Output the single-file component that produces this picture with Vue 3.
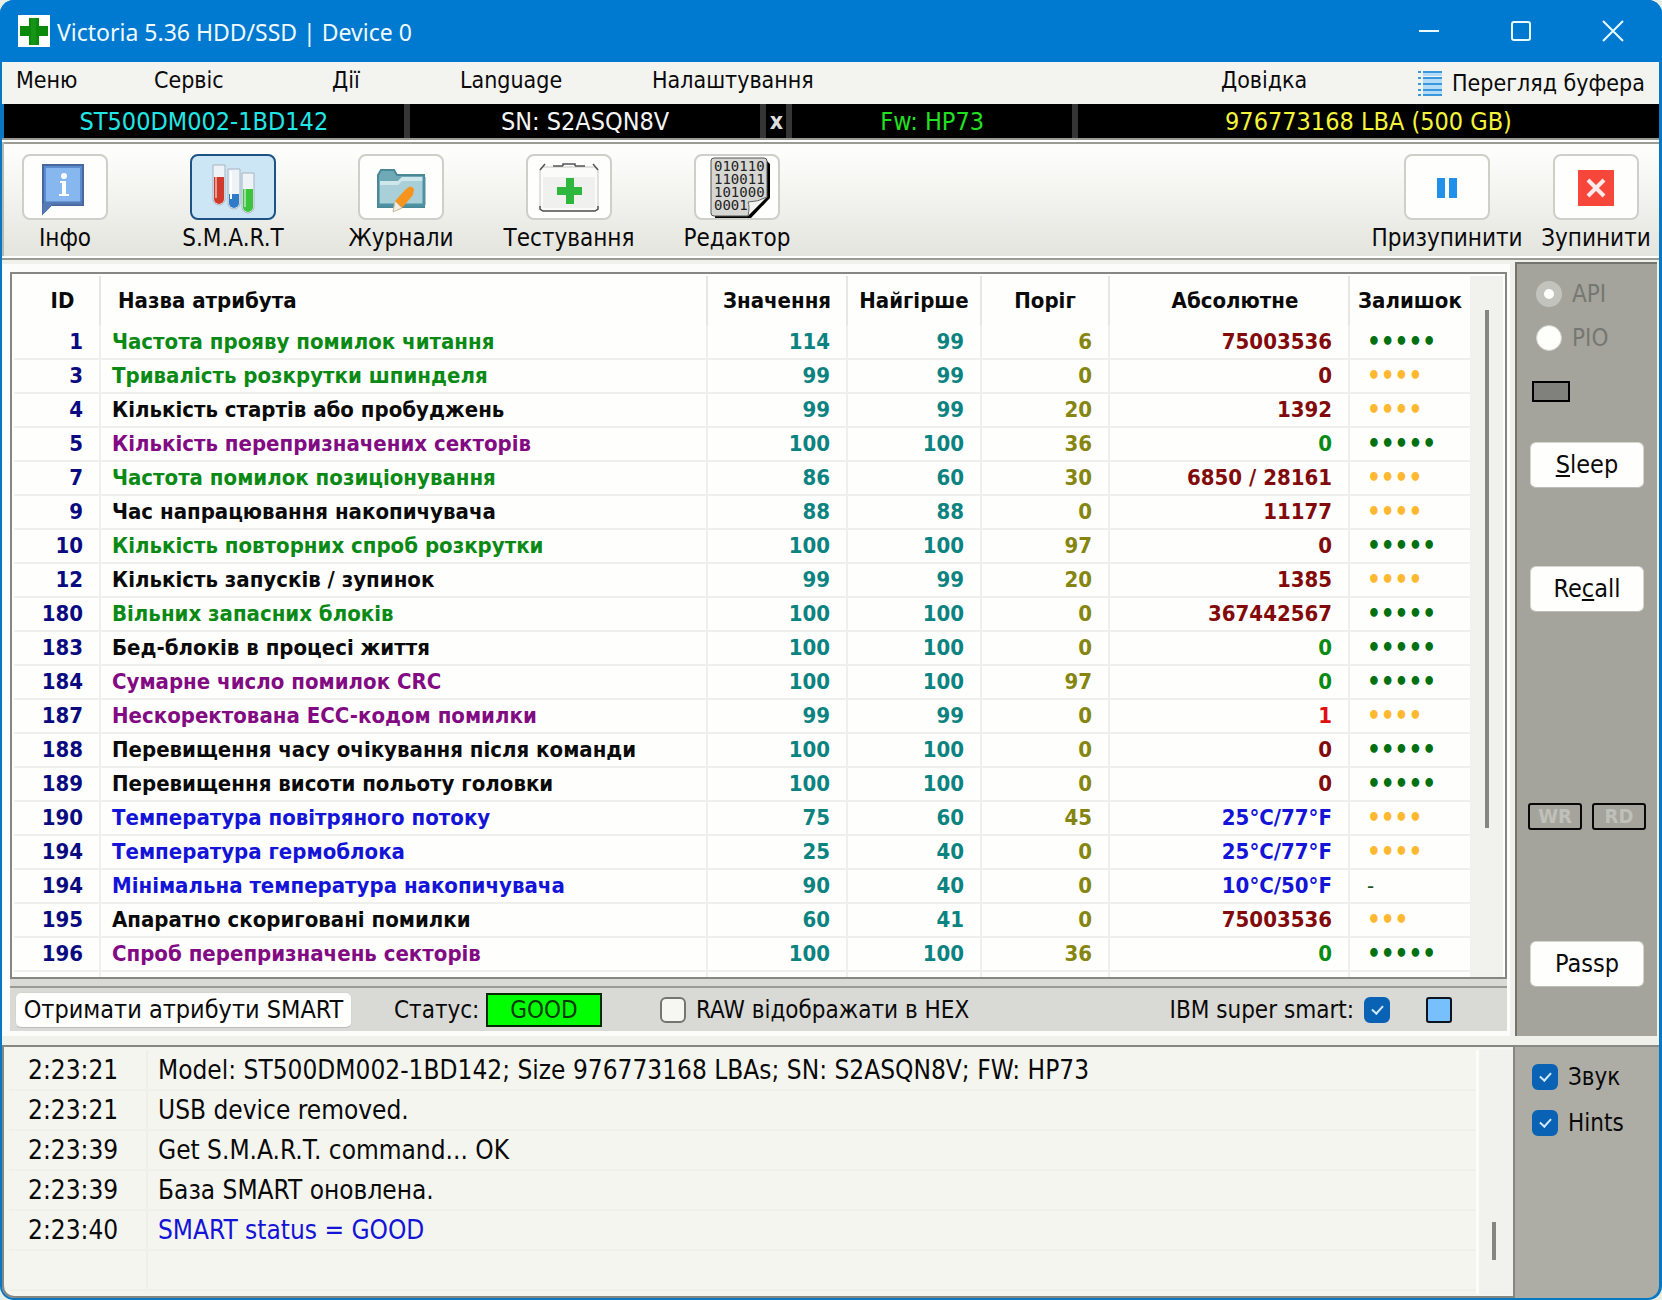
<script setup>
import { ref } from 'vue'

const menu = ['Меню', 'Сервіс', 'Дії', 'Language', 'Налаштування', 'Довідка']

const active = ref('smart')
const tools = [
  { id: 'info', label: 'Інфо' },
  { id: 'smart', label: 'S.M.A.R.T' },
  { id: 'logs', label: 'Журнали' },
  { id: 'test', label: 'Тестування' },
  { id: 'editor', label: 'Редактор' },
]

// id, name, name colour, value, worst, threshold, raw, raw colour, health
const rows = [
  [1, 'Частота прояву помилок читання', 'green', 114, 99, 6, '75003536', 'maroon', 5],
  [3, 'Тривалість розкрутки шпинделя', 'green', 99, 99, 0, '0', 'maroon', 4],
  [4, 'Кількість стартів або пробуджень', 'black', 99, 99, 20, '1392', 'maroon', 4],
  [5, 'Кількість перепризначених секторів', 'purple', 100, 100, 36, '0', 'green', 5],
  [7, 'Частота помилок позиціонування', 'green', 86, 60, 30, '6850 / 28161', 'maroon', 4],
  [9, 'Час напрацювання накопичувача', 'black', 88, 88, 0, '11177', 'maroon', 4],
  [10, 'Кількість повторних спроб розкрутки', 'green', 100, 100, 97, '0', 'maroon', 5],
  [12, 'Кількість запусків / зупинок', 'black', 99, 99, 20, '1385', 'maroon', 4],
  [180, 'Вільних запасних блоків', 'green', 100, 100, 0, '367442567', 'maroon', 5],
  [183, 'Бед-блоків в процесі життя', 'black', 100, 100, 0, '0', 'green', 5],
  [184, 'Сумарне число помилок CRC', 'purple', 100, 100, 97, '0', 'green', 5],
  [187, 'Нескоректована ECC-кодом помилки', 'purple', 99, 99, 0, '1', 'red', 4],
  [188, 'Перевищення часу очікування після команди', 'black', 100, 100, 0, '0', 'maroon', 5],
  [189, 'Перевищення висоти польоту головки', 'black', 100, 100, 0, '0', 'maroon', 5],
  [190, 'Температура повітряного потоку', 'blue', 75, 60, 45, '25°C/77°F', 'blue', 4],
  [194, 'Температура гермоблока', 'blue', 25, 40, 0, '25°C/77°F', 'blue', 4],
  [194, 'Мінімальна температура накопичувача', 'blue', 90, 40, 0, '10°C/50°F', 'blue', 0],
  [195, 'Апаратно скориговані помилки', 'black', 60, 41, 0, '75003536', 'maroon', 3],
  [196, 'Спроб перепризначень секторів', 'purple', 100, 100, 36, '0', 'green', 5],
]

const log = [
  ['2:23:21', 'Model: ST500DM002-1BD142; Size 976773168 LBAs; SN: S2ASQN8V; FW: HP73'],
  ['2:23:21', 'USB device removed.'],
  ['2:23:39', 'Get S.M.A.R.T. command... OK'],
  ['2:23:39', 'База SMART оновлена.'],
  ['2:23:40', 'SMART status = GOOD', 'blue'],
]

const hex = ref(false)
const ibm = ref(true)
const sound = ref(true)
const hints = ref(true)
const access = ref('api')
</script>

<template>
  <div class="window">
    <header class="titlebar">
      <svg class="logo" viewBox="0 0 32 32" aria-hidden="true">
        <rect width="32" height="32" fill="#fff" />
        <path d="M11 3h10v8h9v10h-9v9H11v-9H2V11h9z" fill="#0a8a0a" />
        <path d="M13 3h5v27h-5z" fill="#2aa32a" opacity=".4" />
      </svg>
      <h1>Victoria 5.36 HDD/SSD | Device 0</h1>
      <div class="caption">
        <button aria-label="Minimize"><svg viewBox="0 0 20 20"><path d="M0 10h20" /></svg></button>
        <button aria-label="Maximize"><svg viewBox="0 0 20 20"><rect x="1" y="1" width="18" height="18" rx="2" /></svg></button>
        <button aria-label="Close"><svg viewBox="0 0 20 20"><path d="M0 0l20 20M20 0L0 20" /></svg></button>
      </div>
    </header>

    <nav class="menu">
      <button v-for="m in menu" :key="m">{{ m }}</button>
      <button class="buffer">
        <svg viewBox="0 0 24 25" aria-hidden="true">
          <path d="M0 1h3M0 7h3M0 13h3M0 19h3M0 24h3" stroke="#3a9ae0" stroke-width="2" />
          <path d="M5 3h19M5 10h19M5 16h19M5 22h19" stroke="#b5dcf7" stroke-width="4" />
          <path d="M5 1h19M5 7h19M5 13h19M5 19h19M5 24h19" stroke="#3a97dd" stroke-width="2" />
        </svg>
        Перегляд буфера
      </button>
    </nav>

    <section class="drive">
      <span class="model">ST500DM002-1BD142</span>
      <span class="serial">SN: S2ASQN8V</span>
      <button class="clear">x</button>
      <span class="fw">Fw: HP73</span>
      <span class="lba">976773168 LBA (500 GB)</span>
    </section>

    <section class="toolbar">
      <div v-for="t in tools" :key="t.id" class="tool">
        <button :id="t.id" :class="{ on: active === t.id }" :aria-labelledby="t.id + '-l'" @click="active = t.id">
          <svg v-if="t.id === 'info'" viewBox="0 0 60 60" aria-hidden="true">
            <path d="M8 8h40v40H16l-8 8z" fill="#7db0ea" stroke="#46689f" stroke-width="2" />
            <path d="M10 10h36v36H10z" fill="#86b7ee" stroke="#5c8bcf" stroke-width="2" />
            <path d="M9 46h38M9 48v6l6-6z" stroke="#5579b4" stroke-width="3" fill="#5579b4" />
            <circle cx="29" cy="19" r="3" fill="#fff" />
            <path d="M25 24h6v13h3v2H24v-2h3V26h-2z" fill="#fff" />
          </svg>
          <svg v-else-if="t.id === 'smart'" viewBox="0 0 60 60" aria-hidden="true">
            <g stroke="#a9b3bd" stroke-width="1" fill="#eef3f8">
              <path d="M10 8h12v34a6 6 0 0 1-12 0z" />
              <path d="M25 12h12v34a6 6 0 0 1-12 0z" />
              <path d="M39 16h12v34a6 6 0 0 1-12 0z" />
            </g>
            <path d="M11 20h10v22a5 5 0 0 1-10 0z" fill="#d03a2c" />
            <path d="M26 37h10v9a5 5 0 0 1-10 0z" fill="#2e7cc8" />
            <path d="M40 32h10v18a5 5 0 0 1-10 0z" fill="#3cc43c" />
            <path d="M13 20v21M42 32v18" stroke="#fff" stroke-width="2" opacity=".5" />
            <path d="M28 14v28" stroke="#fff" stroke-width="2" />
          </svg>
          <svg v-else-if="t.id === 'logs'" viewBox="0 0 60 60" aria-hidden="true">
            <path d="M7 50V18l3-5h13l3 5h27v32z" fill="#6fa9b5" stroke="#4a8797" stroke-width="2" />
            <path d="M9 24h18l4-4h22v29H9z" fill="#a9d0d9" />
            <path d="M9 24h18l4-4h22v4H31l-4 4H9z" fill="#cfe6eb" />
            <path d="M8 48h46M53 20v28" stroke="#4d92a3" stroke-width="3" />
            <path d="M24 44l11-12q5-5 8 0l-1 6-11 13z" fill="#f7941d" />
            <path d="M24 44l7 7-9 4z" fill="#f4ece0" stroke="#c9b9a0" />
          </svg>
          <svg v-else-if="t.id === 'test'" viewBox="0 0 60 60" aria-hidden="true">
            <rect x="1" y="10" width="58" height="44" rx="3" fill="#fbfbf9" stroke="#c5c5c0" />
            <rect x="4" y="20" width="52" height="31" fill="#f0f0ee" />
            <path d="M1 13l5-6M59 13l-5-6M14 9h10M36 9h10M24 9V7h12v2M1 49v3l3 2h52l3-2v-3" fill="none" stroke="#555" stroke-width="1.5" />
            <path d="M27 21h8v9h8v8h-8v9h-8v-9h-9v-8h9z" fill="#2db73d" />
          </svg>
          <svg v-else viewBox="0 0 60 60" aria-hidden="true">
            <path d="M10 4h50l3 3v34L44 61H8z" fill="#000" />
            <path d="M4 4q0-3 3-3h50q3 0 3 3v36L41 59H7q-3 0-3-3z" fill="#d6d6d2" stroke="#555" />
            <g font-family="DejaVu Sans Mono, monospace" font-size="14" fill="#222">
              <text x="7" y="14">010110</text>
              <text x="7" y="27">110011</text>
              <text x="7" y="40">101000</text>
              <text x="7" y="53">0001</text>
            </g>
            <path d="M41 59q2-10 0-14 10 0 19-5z" fill="#f4f4f2" stroke="#666" />
          </svg>
        </button>
        <label :id="t.id + '-l'" :for="t.id">{{ t.label }}</label>
      </div>
      <div class="tool pause">
        <button id="pause">
          <svg viewBox="0 0 60 60" aria-hidden="true"><path d="M20 21h8v20h-8zM32 21h8v20h-8z" fill="#2090ea" /></svg>
        </button>
        <label for="pause">Призупинити</label>
      </div>
      <div class="tool stop">
        <button id="stop">
          <svg viewBox="0 0 60 60" aria-hidden="true">
            <rect x="12" y="13" width="36" height="36" fill="#f6473a" />
            <path d="M22 23l16 16M38 23L22 39" stroke="#fdeaea" stroke-width="4" />
          </svg>
        </button>
        <label for="stop">Зупинити</label>
      </div>
    </section>

    <div class="main">
      <main class="smart">
        <div class="grid">
          <table>
            <colgroup>
              <col class="c-id" /><col /><col class="c-val" /><col class="c-worst" />
              <col class="c-thr" /><col class="c-raw" /><col class="c-health" />
            </colgroup>
            <thead>
              <tr>
                <th class="id">ID</th><th class="left">Назва атрибута</th><th>Значення</th><th>Найгірше</th>
                <th>Поріг</th><th class="raw">Абсолютне</th><th>Залишок</th>
              </tr>
            </thead>
            <tbody>
              <tr v-for="(r, i) in rows" :key="i">
                <td class="num navy">{{ r[0] }}</td>
                <td :class="r[2]">{{ r[1] }}</td>
                <td class="num teal">{{ r[3] }}</td>
                <td class="num teal">{{ r[4] }}</td>
                <td class="num olive">{{ r[5] }}</td>
                <td class="num" :class="r[7]">{{ r[6] }}</td>
                <td class="health" :class="{ full: r[8] === 5, none: !r[8] }">{{ r[8] ? '•'.repeat(r[8]) : '-' }}</td>
              </tr>
              <tr class="rest"><td v-for="n in 7" :key="n"></td></tr>
            </tbody>
          </table>
          <div class="scroll"><i></i></div>
        </div>

        <div class="status">
          <button class="push">Отримати атрибути SMART</button>
          <span class="status-label">Статус:</span>
          <output class="good">GOOD</output>
          <label class="check hex"><input v-model="hex" type="checkbox" />RAW відображати в HEX</label>
          <label class="check ibm">IBM super smart:<input v-model="ibm" type="checkbox" /></label>
          <i class="swatch"></i>
        </div>
      </main>

      <aside class="side">
        <label class="radio"><input v-model="access" type="radio" value="api" disabled />API</label>
        <label class="radio"><input v-model="access" type="radio" value="pio" disabled />PIO</label>
        <i class="lamp"></i>
        <button class="push"><u>S</u>leep</button>
        <button class="push recall">Re<u>c</u>all</button>
        <div class="leds"><span>WR</span><span>RD</span></div>
        <button class="push passp">Passp</button>
      </aside>
    </div>

    <footer class="bottom">
      <div class="log">
        <table>
          <tbody>
            <tr v-for="(l, i) in log" :key="i">
              <td class="time">{{ l[0] }}</td>
              <td :class="l[2]">{{ l[1] }}</td>
            </tr>
            <tr><td class="time"></td><td></td></tr>
          </tbody>
        </table>
        <div class="scroll"><i></i></div>
      </div>
      <aside class="options">
        <label class="check"><input v-model="sound" type="checkbox" />Звук</label>
        <label class="check"><input v-model="hints" type="checkbox" />Hints</label>
      </aside>
    </footer>
  </div>
</template>

<style>
body {
  background: #e8efe6;
}
</style>

<style scoped>
* {
  box-sizing: border-box;
}

button {
  margin: 0;
  padding: 0;
  border: 0;
  background: none;
  color: inherit;
  font: inherit;
}

.window {
  display: flex;
  flex-direction: column;
  min-height: 100vh;
  padding: 0 3px 2px 2px;
  border-radius: 14px;
  overflow: hidden;
  background: #0878c4;
  color: #0a0a0a;
  font: 24px/32px "DejaVu Sans Condensed", "DejaVu Sans", sans-serif;
  white-space: nowrap;
}

/* Title bar */
.titlebar {
  display: flex;
  align-items: center;
  height: 62px;
  margin: 0 -3px 0 -2px;
  padding: 0 3px 0 18px;
  background: #007ad0;
  color: #f2fbff;
}
.logo {
  width: 32px;
  height: 32px;
}
h1 {
  flex: 1;
  margin: 2px 0 0 7px;
  font: 400 23px/32px "Noto Sans", "Open Sans", sans-serif;
}
.caption {
  display: flex;
}
.caption button {
  display: flex;
  justify-content: center;
  width: 92px;
}
.caption svg {
  width: 20px;
  height: 20px;
  overflow: visible;
  fill: none;
  stroke: #e9fbff;
  stroke-width: 2;
}

/* Menu */
.menu {
  display: grid;
  grid-template-columns: 138px 178px 128px 192px 1fr 197px 241px;
  align-items: center;
  height: 42px;
  padding-left: 14px;
  background: #f3f3f0;
  font-size: 23px;
}
.menu button {
  padding-bottom: 6px;
  text-align: left;
}
.menu .buffer {
  display: flex;
  align-items: center;
  gap: 10px;
  padding-bottom: 0;
}
.buffer svg {
  width: 24px;
  height: 25px;
}

/* Drive strip */
.drive {
  display: flex;
  gap: 6px;
  height: 34px;
  margin-left: 2px;
  background: #353535;
  font-size: 25px;
  line-height: 35px;
  text-align: center;
}
.drive > * {
  background: #000;
}
.model {
  flex: 399;
  color: #22e6e6;
}
.serial {
  flex: 350;
  color: #f4f4f4;
}
.clear {
  width: 20px;
  color: #ddd;
  font-weight: 700;
  font-size: 23px;
  line-height: 32px;
}
.fw {
  flex: 279;
  color: #22e022;
}
.lba {
  flex: 580;
  color: #f4f43a;
}

/* Toolbar */
.toolbar {
  display: flex;
  height: 122px;
  padding-top: 10px;
  border-top: 2px solid #9b9b95;
  border-bottom: 2px solid #9b9b95;
  background: linear-gradient(#9b9b95, #9b9b95) 0 2px / 100% 2px no-repeat,
    linear-gradient(#fdfdfb 10%, #e4e4de);
  box-shadow: inset 0 2px #fff, inset 0 -2px #fff, inset 2px 0 #b9b9b3;
}
.tool {
  display: flex;
  flex-direction: column;
  align-items: center;
  width: 168px;
  margin-left: -21px;
  margin-right: 21px;
  padding-top: 4px;
}
.tool.pause {
  width: 172px;
  margin: 0 0 0 auto;
}
.tool.stop {
  width: 126px;
  margin: 0;
}
.tool button {
  display: flex;
  justify-content: center;
  align-items: center;
  width: 86px;
  height: 66px;
  border: 2px solid #cfcfca;
  border-radius: 8px;
  background: #fefefc;
}
.tool button.on {
  border-color: #1d5384;
  background: #cce6f6;
}
.tool svg {
  width: 60px;
  height: 60px;
  overflow: visible;
}
.tool label {
  line-height: 36px;
}

/* Attribute panel */
.main {
  display: flex;
  padding-bottom: 9px;
  background: #f1f1ec;
}
.smart {
  flex: 1;
  min-width: 0;
  margin: 4px 5px 0 0;
  padding: 8px 3px 5px 8px;
  background: #fcfcfa;
}
.grid {
  display: flex;
  padding: 2px 2px 0;
  border: 2px solid #868682;
  background: #fefefd;
}
.grid table {
  flex: 1;
  border-collapse: collapse;
  table-layout: fixed;
  font-size: 22px;
  font-weight: 700;
  line-height: 32px;
}
.c-id { width: 86px; }
.c-val { width: 140px; }
.c-worst { width: 134px; }
.c-thr { width: 128px; }
.c-raw { width: 240px; }
.c-health { width: 121px; }
th {
  height: 49px;
  padding: 0;
  border-right: 2px solid #e6e6e2;
}
th.id,
th.raw {
  padding-left: 12px;
}
th:last-child,
.grid td:last-child {
  border-right: 0;
}
th.left {
  padding-left: 17px;
  text-align: left;
}
.grid td {
  height: 34px;
  padding: 0 0 0 11px;
  border-right: 2px solid #efefec;
  border-bottom: 2px solid #efefec;
}
.grid .num {
  padding-right: 16px;
  text-align: right;
}
.grid .rest td {
  height: 6px;
  border-bottom: 0;
}
.grid .health {
  padding-left: 17px;
  color: #ffb930;
  font-size: 24px;
}
.grid .full { color: #007010; }
.grid .none { color: #205020; font-size: 22px; font-weight: 400; }
.navy { color: #0a0a80; }
.teal { color: #0c8380; }
.olive { color: #858510; }
.green { color: #0a8a14; }
.purple { color: #820a82; }
.maroon { color: #820a0a; }
.blue { color: #1414d8; }
.red { color: #e01010; }
.black { color: #0a0a0a; }

.scroll {
  width: 33px;
  background: #f1f1ee;
}
.scroll i {
  display: block;
  width: 4px;
  margin: 34px 0 0 15px;
  background: #858582;
}
.grid .scroll i {
  height: 518px;
}

.status {
  display: flex;
  align-items: center;
  height: 52px;
  padding: 10px 55px 0 5px;
  background: linear-gradient(#9b9b95, #9b9b95) 0 7px / 100% 2px no-repeat, #d9d9d5;
}
.push {
  height: 36px;
  border: 1px solid #d5d5d0;
  border-bottom-color: #bdbdb8;
  border-radius: 6px;
  background: #fefefc;
  font-size: 25px;
}
.status .push {
  width: 337px;
}
.status-label {
  width: 92px;
  margin-left: 42px;
}
.good {
  width: 116px;
  border: 2px solid #042a04;
  background: #00ff00;
  color: #043a04;
  text-align: center;
  line-height: 30px;
}
.check {
  display: flex;
  align-items: center;
  gap: 10px;
}
.hex {
  margin-left: 58px;
}
.ibm {
  margin-left: auto;
}
.check input {
  appearance: none;
  display: flex;
  justify-content: center;
  width: 26px;
  height: 26px;
  margin: 0;
  border: 2px solid #75756f;
  border-radius: 6px;
  background: #f6f6f3;
}
.check input:checked {
  border-color: #0a62b4;
  background: #0a62b4;
}
.check input:checked::after {
  content: "";
  width: 5px;
  height: 9px;
  margin-top: 4px;
  border: solid #cfeaff;
  border-width: 0 2px 2px 0;
  transform: rotate(42deg);
}
.swatch {
  width: 26px;
  height: 26px;
  margin-left: 36px;
  border: 2px solid #0c1420;
  border-radius: 3px;
  background: #78c0fc;
}

/* Right column */
.side {
  display: flex;
  flex-direction: column;
  width: 142px;
  margin: 2px 2px 0 0;
  padding: 14px 13px 0;
  border-top: 2px solid #74746e;
  border-left: 2px solid #74746e;
  background: #a4a49c;
}
.radio {
  display: flex;
  align-items: center;
  gap: 10px;
  height: 32px;
  margin-bottom: 12px;
  padding-left: 6px;
  color: #777771;
}
.radio input {
  appearance: none;
  width: 26px;
  height: 26px;
  margin: 0;
  border: 1px solid #d0d0ca;
  border-radius: 50%;
  background: #fefefa;
}
.radio input:checked {
  border: 8px solid #c3c3bd;
}
.lamp {
  width: 38px;
  height: 21px;
  margin: 15px 0 40px 2px;
  border: 2px solid #000;
  background: #80807c;
}
.side .push {
  height: 46px;
}
.recall {
  margin-top: 78px;
}
.leds {
  display: flex;
  justify-content: space-between;
  margin: 191px -2px 111px;
}
.leds span {
  width: 54px;
  height: 27px;
  border: 2px solid #080808;
  border-radius: 3px;
  color: #c0c0ba;
  font-size: 20px;
  font-weight: 700;
  line-height: 23px;
  text-align: center;
}

/* Log */
.bottom {
  display: flex;
  flex: 1;
  background: #adada5;
  border-radius: 0 0 12px 12px;
  overflow: hidden;
}
.log {
  display: flex;
  flex: 1;
  padding: 3px 0 2px;
  border: 2px solid #868682;
  border-radius: 0 0 0 12px;
  background: #f5f5ef;
  font-size: 26px;
}
.log table {
  flex: 1;
  align-self: flex-start;
  height: 240px;
  margin-left: 5px;
  border-collapse: collapse;
}
.log td {
  height: 40px;
  padding: 0 0 0 10px;
  border-bottom: 2px solid #f0f0ea;
}
.log .time {
  width: 138px;
  padding-left: 19px;
  border-right: 2px solid #efefe9;
}
.log .scroll {
  width: 37px;
  border-left: 3px solid #fcfcf8;
}
.log .scroll i {
  height: 38px;
  margin: 172px 0 0 13px;
}
.options {
  width: 144px;
  padding: 14px 0 0 17px;
  border-top: 2px solid #8a8a84;
}
.options .check {
  height: 32px;
  margin-bottom: 14px;
}
</style>
